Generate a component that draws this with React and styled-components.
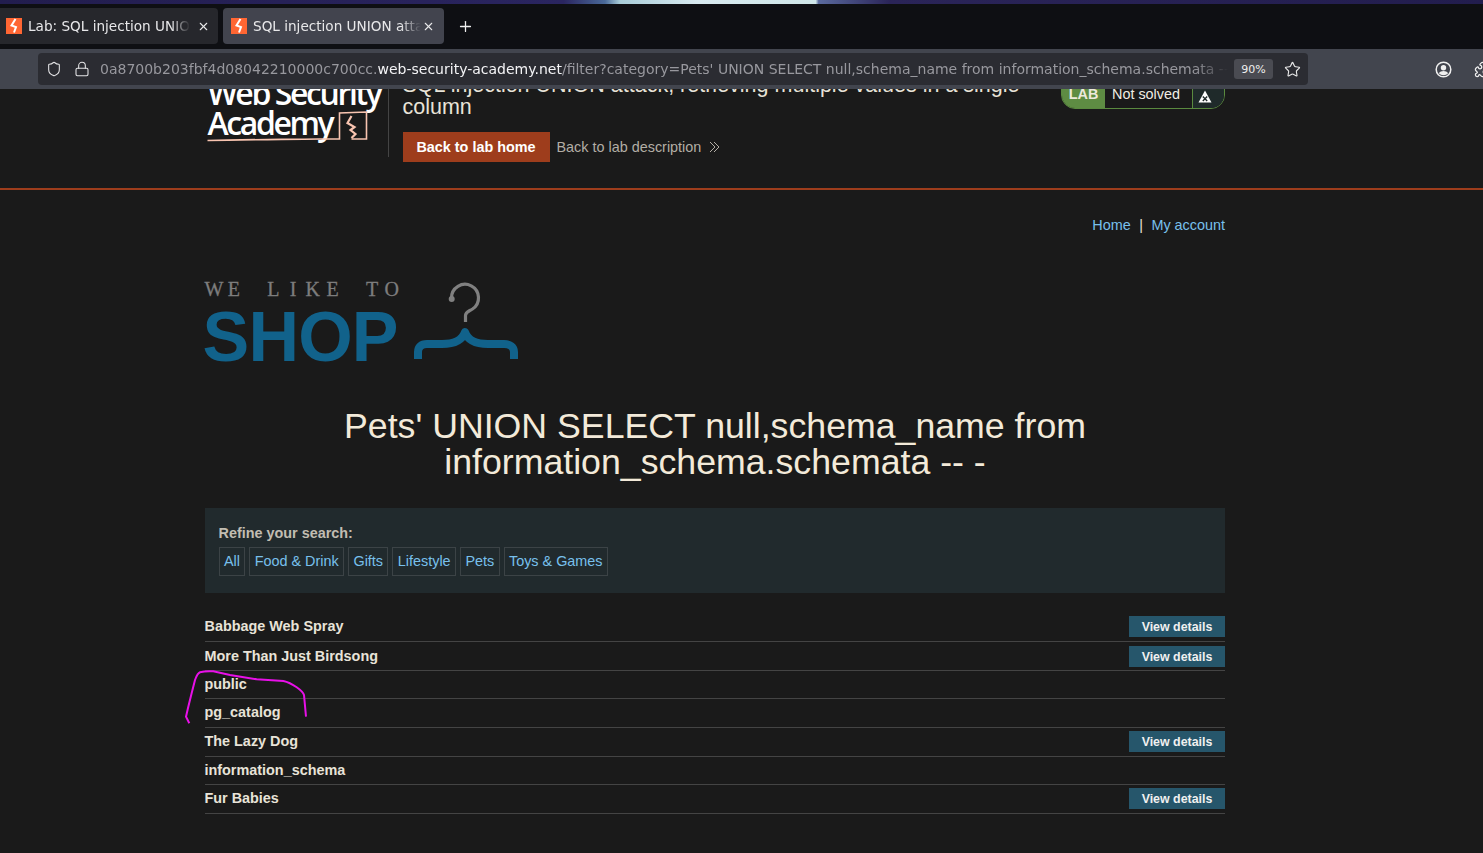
import React from "react";
import styled, { createGlobalStyle } from "styled-components";
import { Shield, Lock, Star, Puzzle, X, Plus } from "lucide-react";

const GlobalStyle = createGlobalStyle`
  html, body {
    margin: 0;
    padding: 0;
    height: 100%;
    overflow: hidden;
    background: #1a1a1a;
  }
  body {
    font-family: "Liberation Sans", Arial, sans-serif;
  }
`;

const Browser = styled.div`
  width: 1483px;
  height: 853px;
  overflow: hidden;
  display: flex;
  flex-direction: column;
`;

const Wallpaper = styled.div`
  height: 4px;
  flex: none;
  background: linear-gradient(90deg, #221d4e 0%, #2a2560 38%, #4a6a9a 40.8%, #a8ccd8 41.8%, #d8eaf0 47%, #cfe6e8 55%, #5a6a9e 55.2%, #2a2458 60%, #221d4e 100%);
`;

const TabBar = styled.div`
  height: 45px;
  flex: none;
  background: #0e0f13;
  display: flex;
  align-items: flex-start;
  padding-top: 4px;
  box-sizing: border-box;
  gap: 5px;
`;

const Tab = styled.div`
  width: ${(p) => p.$width}px;
  height: 36px;
  background: ${(p) => (p.$active ? "#42444e" : "#26272c")};
  border-radius: ${(p) => (p.$active ? "4px" : "0 4px 4px 0")};
  display: flex;
  align-items: center;
  padding: ${(p) => (p.$active ? "0 9px 0 8px" : "0 8px 0 6px")};
  box-sizing: border-box;
  color: #e8e8ea;
  font: 13.6px "DejaVu Sans", sans-serif;
`;

const TabIcon = styled.svg`
  width: 16px;
  height: 16px;
  flex: none;
  margin-right: 6px;
`;

const TabTitle = styled.span`
  flex: 1;
  white-space: nowrap;
  overflow: hidden;
  -webkit-mask-image: linear-gradient(90deg, #000 88%, transparent 100%);
  mask-image: linear-gradient(90deg, #000 88%, transparent 100%);
`;

const TabClose = styled(X)`
  width: 13px;
  height: 13px;
  flex: none;
  margin-left: ${(p) => p.$gap}px;
  color: #e8e8ea;
`;

const NewTab = styled(Plus)`
  width: 17px;
  height: 17px;
  color: #f0f0f0;
  margin: 10px 0 0 8px;
`;

const NavBar = styled.div`
  height: 40px;
  flex: none;
  background: #42454e;
  display: flex;
  align-items: center;
  box-sizing: border-box;
  padding-left: 38px;
`;

const UrlBox = styled.div`
  width: 1270px;
  height: 32px;
  flex: none;
  background: #2b2c32;
  border-radius: 4px;
  display: flex;
  align-items: center;
  box-sizing: border-box;
  padding: 0 7px 0 8px;
  color: #98989e;
  font: 14px "DejaVu Sans", sans-serif;
`;

const UrlIcon = styled.span`
  display: flex;
  width: 16px;
  height: 16px;
  margin-right: ${(p) => p.$gap}px;
  color: #e4e4e6;
  flex: none;
`;

const UrlText = styled.div`
  flex: 1;
  white-space: nowrap;
  overflow: hidden;
  -webkit-mask-image: linear-gradient(90deg, #000 97%, transparent 100%);
  mask-image: linear-gradient(90deg, #000 97%, transparent 100%);
  b {
    font-weight: 400;
    color: #f4f4f6;
  }
`;

const Zoom = styled.div`
  width: 39px;
  height: 20px;
  background: #4a4b52;
  border-radius: 3px;
  color: #eeeeee;
  font-size: 11px;
  display: flex;
  align-items: center;
  justify-content: center;
  margin: 0 11px 0 6px;
  flex: none;
`;

const NavRight = styled.div`
  display: flex;
  align-items: center;
  gap: 22px;
  margin-left: 127px;
  color: #f0f0f0;
  flex: none;
`;

const PuzzleIcon = styled(Puzzle)`
  flex: none;
`;

const Viewport = styled.div`
  flex: 1;
  overflow: hidden;
  background: #1a1a1a;
`;

const LabHeader = styled.div`
  height: 99px;
  border-bottom: 2px solid #9e3d1c;
`;

const Container = styled.div`
  width: 1020.5px;
  margin-left: 204.5px;
`;

const HeaderRow = styled(Container)`
  display: flex;
  height: 99px;
  overflow: hidden;
`;

const LogoBlock = styled.div`
  width: 183px;
  height: 68px;
  border-right: 1px solid #444;
  position: relative;
  flex: none;
`;

const LogoLine = styled.div`
  font: 600 ${(p) => p.$size}px/1 "Open Sans", sans-serif;
  color: #fff;
  letter-spacing: -2.4px;
  white-space: nowrap;
  margin: ${(p) => p.$margin};
`;

const LogoDoodle = styled.svg`
  position: absolute;
  left: 0;
  top: 0;
`;

const LabTitleBlock = styled.div`
  flex: 1;
  margin-left: 14px;
  min-width: 0;
`;

const LabTitle = styled.div`
  font-size: 21.5px;
  line-height: 22px;
  color: #e8e3d8;
  margin-top: -15px;
  width: 640px;
`;

const LabLinks = styled.div`
  display: flex;
  align-items: center;
  margin-top: 14px;
`;

const BackButton = styled.div`
  width: 147px;
  height: 30px;
  background: #9e3d1c;
  color: #fff;
  font-size: 14.4px;
  font-weight: 700;
  display: flex;
  align-items: center;
  justify-content: center;
`;

const BackLink = styled.div`
  color: #b3aea5;
  font-size: 14.4px;
  margin-left: 7px;
  display: flex;
  align-items: center;
  gap: 8px;
`;

const LabBadge = styled.div`
  width: 164px;
  height: 29px;
  margin-top: -9px;
  border: 1px solid #5a8a3f;
  border-radius: 0 0 14px 14px;
  box-sizing: border-box;
  display: flex;
  align-items: stretch;
  flex: none;
  overflow: hidden;
  font-size: 14.4px;
`;

const BadgeTag = styled.div`
  width: 43px;
  background: #5e8c43;
  color: #ece8dc;
  font-weight: 700;
  display: flex;
  align-items: flex-end;
  justify-content: center;
  padding-bottom: 6px;
  box-sizing: border-box;
`;

const BadgeText = styled.div`
  width: 88px;
  color: #f0ede4;
  display: flex;
  align-items: flex-end;
  padding: 0 0 6px 7px;
  box-sizing: border-box;
  border-right: 1px solid #5a8a3f;
`;

const BadgeIcon = styled.div`
  flex: 1;
  background: #1f2a2a;
  display: flex;
  align-items: flex-end;
  justify-content: center;
  padding: 0 7px 5px 0;
`;

const TopLinks = styled(Container)`
  display: flex;
  justify-content: flex-end;
  align-items: center;
  gap: 8.5px;
  margin-top: 26px;
  height: 18px;
  color: #e8e3d8;
  font-size: 14.4px;
`;

const Link = styled.span`
  color: #78c0ec;
`;

const ShopLogo = styled(Container)`
  margin-top: 45px;
  height: 88px;
  display: flex;
  align-items: flex-start;
`;

const ShopWords = styled.div`
  width: 200px;
  flex: none;
`;

const WeLike = styled.div`
  display: flex;
  font: 20px/20px "Liberation Serif", serif;
  color: #7d7d7d;
  -webkit-text-stroke: 0.3px #7d7d7d;
  margin-left: -0.4px;
`;

const WeLikeCell = styled.span`
  width: 19.75px;
  flex: none;
  text-align: center;
`;

const ShopText = styled.div`
  font: 700 70px/62px "Liberation Sans", sans-serif;
  color: #11628b;
  letter-spacing: -0.8px;
  margin: 7px 0 0 -2px;
`;

const Hanger = styled.svg`
  margin-left: 5.5px;
  flex: none;
`;

const Heading = styled.h1`
  width: 800px;
  margin: 42px 0 0 315px;
  font-size: 35.7px;
  line-height: 35.5px;
  font-weight: 400;
  color: #f3ead9;
  text-align: center;
`;

const Filters = styled(Container)`
  margin-top: 28px;
  height: 85px;
  background: #212a2d;
  padding: 17px 14px 0;
  box-sizing: border-box;
`;

const FilterLabel = styled.div`
  font-size: 14.4px;
  line-height: 17px;
  font-weight: 700;
  color: #c2bdb2;
`;

const FilterRow = styled.div`
  display: flex;
  gap: 4px;
  margin-top: 5px;
`;

const FilterChip = styled.span`
  height: 29px;
  border: 1px solid #3c4346;
  box-sizing: border-box;
  padding: 0 4.4px 2px;
  display: flex;
  align-items: center;
  color: #78c0ec;
  font-size: 14.4px;
`;

const ProductList = styled(Container)`
  margin-top: 19px;
  position: relative;
`;

const Row = styled.div`
  height: ${(p) => p.$height}px;
  border-bottom: 1px solid #444;
  box-sizing: border-box;
  display: flex;
  align-items: center;
  justify-content: space-between;
  color: #e8e3d8;
  font-size: 14.4px;
  font-weight: 700;
  padding-bottom: 1px;
`;

const RowName = styled.span`
  padding-bottom: ${(p) => (p.$lift ? 2 : 0)}px;
`;

const DetailsButton = styled.div`
  width: 96px;
  height: 21px;
  align-self: flex-start;
  margin-top: ${(p) => p.$top}px;
  background: #26566b;
  color: #f0f0f0;
  font-size: 12.4px;
  font-weight: 700;
  display: flex;
  align-items: center;
  justify-content: center;
`;

const Scribble = styled.svg`
  position: absolute;
  left: -24.5px;
  top: 48px;
  pointer-events: none;
`;

const products = [
  { name: "Babbage Web Spray", height: 30, top: 4 },
  { name: "More Than Just Birdsong", height: 29, top: 4 },
  { name: "public", height: 28 },
  { name: "pg_catalog", height: 29, lift: true },
  { name: "The Lazy Dog", height: 29, top: 3, lift: true },
  { name: "information_schema", height: 28 },
  { name: "Fur Babies", height: 29, top: 3, lift: true },
];

const filters = ["All", "Food & Drink", "Gifts", "Lifestyle", "Pets", "Toys & Games"];

const Favicon = () => (
  <TabIcon viewBox="0 0 16 16">
    <rect width="16" height="16" fill="#ff6633" />
    <path d="M9.500 1 5.500 7.500l4.500 1.500-2 5.500" fill="none" stroke="#fff" strokeWidth="2" />
  </TabIcon>
);

const App = () => (
  <Browser>
    <GlobalStyle />
    <Wallpaper />
    <TabBar>
      <Tab $width={218}>
        <Favicon />
        <TabTitle>Lab: SQL injection UNION attack</TabTitle>
        <TabClose $gap={7} strokeWidth={2} />
      </Tab>
      <Tab $width={221} $active>
        <Favicon />
        <TabTitle>SQL injection UNION attack</TabTitle>
        <TabClose $gap={1} strokeWidth={2} />
      </Tab>
      <NewTab strokeWidth={1.8} />
    </TabBar>
    <NavBar>
      <UrlBox>
        <UrlIcon $gap={12}><Shield size={16} strokeWidth={1.6} /></UrlIcon>
        <UrlIcon $gap={10}><Lock size={16} strokeWidth={1.6} /></UrlIcon>
        <UrlText>
          0a8700b203fbf4d08042210000c700cc.<b>web-security-academy.net</b>/filter?category=Pets' UNION SELECT null,schema_name from information_schema.schemata -- -
        </UrlText>
        <Zoom>90%</Zoom>
        <Star size={17} strokeWidth={1.6} color="#e8e8e8" />
      </UrlBox>
      <NavRight>
        <svg width="17" height="17" viewBox="0 0 17 17">
          <circle cx="8.500" cy="8.500" r="7.300" fill="none" stroke="currentColor" strokeWidth="1.500" />
          <circle cx="8.500" cy="6.800" r="2.700" fill="currentColor" />
          <path d="M3.800 12.200c1-1.600 2.800-2.300 4.700-2.300s3.700.7 4.700 2.300c-1.200 1.300-2.900 2-4.700 2s-3.500-.7-4.700-2z" fill="currentColor" />
        </svg>
        <PuzzleIcon size={17} strokeWidth={1.8} />
      </NavRight>
    </NavBar>
    <Viewport>
      <LabHeader>
        <HeaderRow>
          <LogoBlock>
            <LogoLine $size={32} $margin="-12px 0 0 3px">Web Security</LogoLine>
            <LogoLine $size={32} $margin="-2px 0 0 3px">Academy</LogoLine>
            <LogoDoodle width="184" height="68" viewBox="204.500 89 184 68">
              <path d="M207 140.500c36-1 76-1 112-1.500M319 139l20 0V113l27-1v27h-15" fill="none" stroke="#f8c4b0" strokeWidth="1.600" />
              <path d="M351 116l-4 7 7 4-4 3 5 4-4 4" fill="none" stroke="#f8c4b0" strokeWidth="2.200" />
            </LogoDoodle>
          </LogoBlock>
          <LabTitleBlock>
            <LabTitle>SQL injection UNION attack, retrieving multiple values in a single column</LabTitle>
            <LabLinks>
              <BackButton>Back to lab home</BackButton>
              <BackLink>
                Back to lab description
                <svg width="11" height="12" viewBox="0 0 11 12">
                  <path d="M1 1l5 5-5 5M5 1l5 5-5 5" fill="none" stroke="currentColor" strokeWidth="1" />
                </svg>
              </BackLink>
            </LabLinks>
          </LabTitleBlock>
          <LabBadge>
            <BadgeTag>LAB</BadgeTag>
            <BadgeText>Not solved</BadgeText>
            <BadgeIcon>
              <svg width="14" height="13" viewBox="0 0 14 13">
                <path d="M7 0.500 13.500 12.500H0.500z" fill="#fff" />
                <path d="M4.800 6.500l4.400 4.500M9.200 6.500l-4.400 4.500" stroke="#1f2a2a" strokeWidth="1.400" />
              </svg>
            </BadgeIcon>
          </LabBadge>
        </HeaderRow>
      </LabHeader>
      <TopLinks>
        <Link>Home</Link>
        <span>|</span>
        <Link>My account</Link>
      </TopLinks>
      <ShopLogo>
        <ShopWords>
          <WeLike>
            {"WE LIKE TO".split("").map((c, i) => (
              <WeLikeCell key={i}>{c}</WeLikeCell>
            ))}
          </WeLike>
          <ShopText>SHOP</ShopText>
        </ShopWords>
        <Hanger width="112" height="84" viewBox="410 279 112 84">
          <path d="M451.500 298a13.500 13.500 0 1 1 21 11c-4 2.500-7 3-7 6.500v6.500" fill="none" stroke="#808080" strokeWidth="3.200" />
          <circle cx="451.700" cy="299" r="3" fill="#808080" />
          <path d="M418 359v-7c0-5 3-8 9-8h15c12 0 20-3 23-12 3 9 11 12 23 12h16c6 0 10 3 10 8v7" fill="none" stroke="#11628b" strokeWidth="8" strokeLinejoin="round" />
        </Hanger>
      </ShopLogo>
      <Heading>Pets' UNION SELECT null,schema_name from information_schema.schemata -- -</Heading>
      <Filters>
        <FilterLabel>Refine your search:</FilterLabel>
        <FilterRow>
          {filters.map((f) => (
            <FilterChip key={f}>{f}</FilterChip>
          ))}
        </FilterRow>
      </Filters>
      <ProductList>
        {products.map((p) => (
          <Row key={p.name} $height={p.height}>
            <RowName $lift={p.lift}>{p.name}</RowName>
            {p.top && <DetailsButton $top={p.top}>View details</DetailsButton>}
          </Row>
        ))}
        <Scribble width="135" height="70" viewBox="180 660 135 70">
          <path d="M189.300 723.300 186 716.700l2.300-10 3.400-13.700 3.300-13c1.500-4 3-7 5-7.700 4-1.200 9-1.200 13.300-1l16.700 3.700 26.700 4.300 26.600 1.700c5 1 9.500 3.500 13.400 6.300 3.500 2.500 6.500 4.700 7.300 7.700l2 21.700" fill="none" stroke="#e810e8" strokeWidth="2" />
        </Scribble>
      </ProductList>
    </Viewport>
  </Browser>
);

export default App;
